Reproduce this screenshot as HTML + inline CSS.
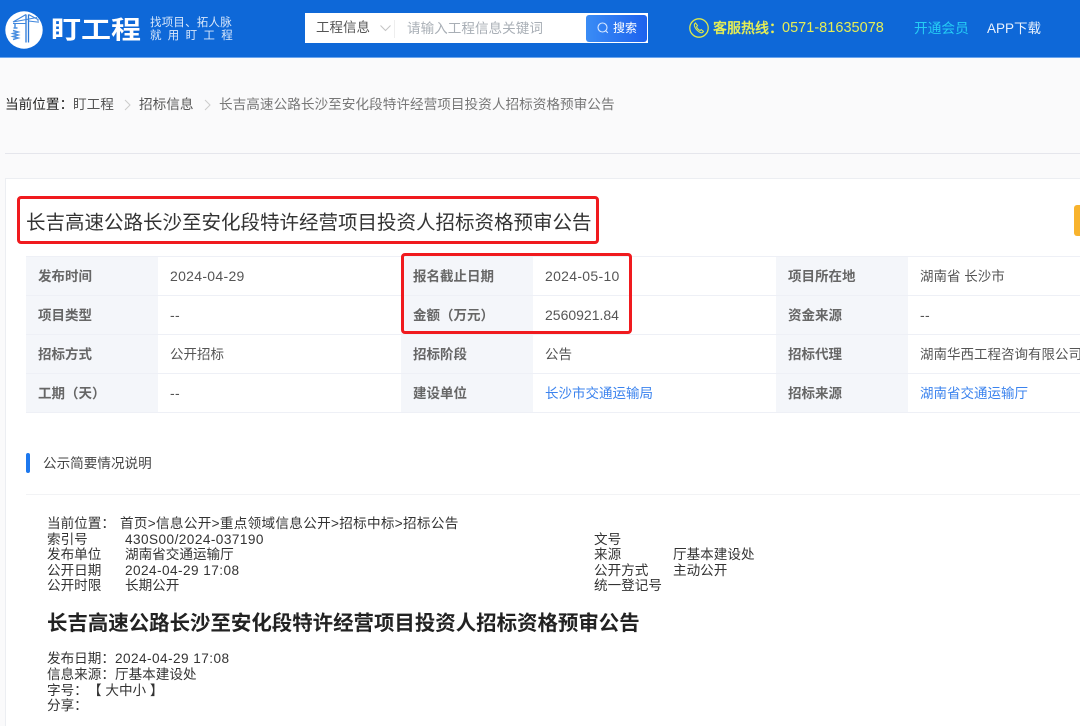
<!DOCTYPE html>
<html lang="zh">
<head>
<meta charset="utf-8">
<style>
html,body{margin:0;padding:0}
body{width:1080px;height:726px;overflow:hidden;position:relative;background:#fafafb;font-family:"Liberation Sans","Noto Sans CJK SC",sans-serif;color:#333}
.a{position:absolute;white-space:nowrap}
.t{line-height:16px;font-size:13.5px;color:#555}
.n{font-size:14px;letter-spacing:.3px}
.l{font-weight:700;color:#666}
.row{position:absolute;left:26px;width:1054px;height:1px;background:#eef0f6}
.lab{position:absolute;width:132px;top:257px;height:155px;background:#f4f6fa}
.doc{font-size:13.6px;line-height:15px;color:#333}
.d{letter-spacing:.45px}
.bc{font-size:13.65px;line-height:18px;top:96px}
</style>
</head>
<body>
<div class="a" style="left:0;top:0;width:1080px;height:57px;background:#0e68d8;border-bottom:1px solid #6aa5ee"></div>
<svg class="a" style="left:5px;top:11px" width="38" height="38" viewBox="0 0 38 38">
<circle cx="19" cy="19" r="18.7" fill="#fff"/>
<path d="M21 3.500V31.500M23.500 3.500V31.500" stroke="#2a78d8" stroke-width="1.300" fill="none"/>
<path d="M8 11L32 6.500M8 12.500H21M21 3.500L8 11M23.500 3.500L33 8.500V12M23.500 10L32 11" stroke="#3f86dc" stroke-width="1.100" fill="none"/>
<path d="M10 12.500v4M8.500 17h4M8 19.500l5 1.500-5 1.500 5 1.500-5 1.500 5 1.500-5 1.500" stroke="#4a8fe0" stroke-width="1.500" fill="none"/>
</svg>
<div class="a" style="left:51px;top:9px;font-size:30px;line-height:38px;font-weight:700;color:#fff;transform:scaleY(.84);transform-origin:left bottom">盯工程</div>
<div class="a" style="left:150px;top:17px;font-size:11.500px;line-height:13px;color:#d9e8fb;letter-spacing:.2px">找项目、拓人脉</div>
<div class="a" style="left:150px;top:30px;font-size:11.500px;line-height:13px;color:#d9e8fb;letter-spacing:6.300px">就用盯工程</div>

<div class="a" style="left:305px;top:13px;width:343px;height:30px;background:#fff"></div>
<div class="a" style="left:316px;top:19px;font-size:13.500px;line-height:18px;color:#555">工程信息</div>
<svg class="a" style="left:379px;top:24px" width="13" height="9" viewBox="0 0 13 9"><path d="M1.500 1.500L6.500 6.500L11.500 1.500" stroke="#c4c4c4" stroke-width="1" fill="none"/></svg>
<div class="a" style="left:394px;top:20px;width:1px;height:18px;background:#eee"></div>
<div class="a" style="left:407px;top:20px;font-size:13.600px;line-height:18px;color:#a9afb6">请输入工程信息关键词</div>
<div class="a" style="left:586px;top:15px;width:61px;height:27px;border-radius:3px;background:linear-gradient(90deg,#3a8cf5,#1d62ee)"></div>
<svg class="a" style="left:596px;top:21px" width="14" height="14" viewBox="0 0 14 14"><circle cx="6.500" cy="6.500" r="4.500" stroke="#d8e8ff" stroke-width="1.100" fill="none"/><path d="M10 10l1.800 1.800" stroke="#d8e8ff" stroke-width="1.100"/></svg>
<div class="a" style="left:613px;top:20px;font-size:12px;line-height:17px;color:#fff">搜索</div>

<svg class="a" style="left:689px;top:18px" width="20" height="20" viewBox="0 0 20 20"><circle cx="10" cy="10" r="9.200" stroke="#dde84a" stroke-width="1.300" fill="none"/><path d="M6.500 5c-1.500 1-1.500 2.600-.5 4.400 1.300 2.300 3 4 5 5 1.500.7 2.800.3 3.500-1l-2.300-1.800-1.200 1c-1.500-.8-2.800-2.200-3.500-3.800l1-1.200z" stroke="#dde84a" stroke-width="1.100" fill="none"/></svg>
<div class="a" style="left:713px;top:19px;font-size:14px;line-height:18px;font-weight:500;color:#e6ee55;-webkit-text-stroke:.25px #e6ee55">客服热线：</div>
<div class="a" style="left:782px;top:19px;font-size:14.500px;line-height:18px;color:#e6ee55;letter-spacing:.02px">0571-81635078</div>
<div class="a" style="left:914px;top:20px;font-size:13.700px;line-height:18px;color:#25cdf5">开通会员</div>
<div class="a" style="left:987px;top:20px;font-size:13.500px;line-height:18px;color:#e8f1fd">APP下载</div>

<div class="a bc" style="left:5px;color:#222">当前位置：</div>
<div class="a bc" style="left:73px;color:#555">盯工程</div>
<svg class="a" style="left:123px;top:99px" width="9" height="12" viewBox="0 0 9 12"><path d="M2 1l5 5-5 5" stroke="#ccc" stroke-width="1" fill="none"/></svg>
<div class="a bc" style="left:139px;color:#555">招标信息</div>
<svg class="a" style="left:203px;top:99px" width="9" height="12" viewBox="0 0 9 12"><path d="M2 1l5 5-5 5" stroke="#ccc" stroke-width="1" fill="none"/></svg>
<div class="a bc" style="left:219px;color:#777">长吉高速公路长沙至安化段特许经营项目投资人招标资格预审公告</div>
<div class="a" style="left:5px;top:153px;width:1075px;height:1px;background:#e5e6ec"></div>

<div class="a" style="left:5px;top:178px;width:1075px;height:548px;background:#fff;border-left:1px solid #eceef2;border-top:1px solid #eceef2;box-sizing:border-box"></div>
<div class="a" style="left:26px;top:211px;font-size:19.500px;line-height:24px;color:#333">长吉高速公路长沙至安化段特许经营项目投资人招标资格预审公告</div>
<div class="a" style="left:1074px;top:205px;width:6px;height:31px;background:#f8b32d;border-radius:3px 0 0 3px"></div>

<div class="lab" style="left:26px"></div>
<div class="lab" style="left:401px"></div>
<div class="lab" style="left:776px"></div>
<div class="row" style="top:256px"></div>
<div class="row" style="top:295px"></div>
<div class="row" style="top:334px"></div>
<div class="row" style="top:373px"></div>
<div class="row" style="top:412px"></div>

<div class="a t l" style="left:38px;top:269px">发布时间</div>
<div class="a t n" style="left:170px;top:268px">2024-04-29</div>
<div class="a t l" style="left:413px;top:269px">报名截止日期</div>
<div class="a t n" style="left:545px;top:268px">2024-05-10</div>
<div class="a t l" style="left:788px;top:269px">项目所在地</div>
<div class="a t" style="left:920px;top:269px">湖南省 长沙市</div>

<div class="a t l" style="left:38px;top:308px">项目类型</div>
<div class="a t n" style="left:170px;top:307px">--</div>
<div class="a t l" style="left:413px;top:308px">金额（万元）</div>
<div class="a t n" style="left:545px;top:307px;letter-spacing:0">2560921.84</div>
<div class="a t l" style="left:788px;top:308px">资金来源</div>
<div class="a t n" style="left:920px;top:307px">--</div>

<div class="a t l" style="left:38px;top:347px">招标方式</div>
<div class="a t" style="left:170px;top:347px">公开招标</div>
<div class="a t l" style="left:413px;top:347px">招标阶段</div>
<div class="a t" style="left:545px;top:347px">公告</div>
<div class="a t l" style="left:788px;top:347px">招标代理</div>
<div class="a t" style="left:920px;top:347px">湖南华西工程咨询有限公司</div>

<div class="a t l" style="left:38px;top:386px">工期（天）</div>
<div class="a t n" style="left:170px;top:385px">--</div>
<div class="a t l" style="left:413px;top:386px">建设单位</div>
<div class="a t" style="left:545px;top:386px;color:#3b83ee">长沙市交通运输局</div>
<div class="a t l" style="left:788px;top:386px">招标来源</div>
<div class="a t" style="left:920px;top:386px;color:#3b83ee">湖南省交通运输厅</div>

<div class="a" style="left:17px;top:196px;width:582px;height:48px;border:3px solid #f01a1e;border-radius:4px;box-sizing:border-box"></div>
<div class="a" style="left:401px;top:253px;width:231px;height:81px;border:3px solid #f01a1e;border-radius:4px;box-sizing:border-box"></div>

<div class="a" style="left:26px;top:453px;width:4px;height:20px;background:#1d78ee;border-radius:2px"></div>
<div class="a" style="left:43px;top:456px;font-size:13.600px;line-height:16px;color:#444">公示简要情况说明</div>
<div class="a" style="left:26px;top:494px;width:1054px;height:1px;background:#f2f3f5"></div>

<div class="a doc" style="left:47px;top:516px">当前位置：</div>
<div class="a doc" style="left:120px;top:516px;letter-spacing:.3px">首页&gt;信息公开&gt;重点领域信息公开&gt;招标中标&gt;招标公告</div>
<div class="a doc" style="left:47px;top:532px">索引号</div>
<div class="a doc d" style="left:125px;top:532px">430S00/2024-037190</div>
<div class="a doc" style="left:47px;top:547px">发布单位</div>
<div class="a doc" style="left:125px;top:547px">湖南省交通运输厅</div>
<div class="a doc" style="left:47px;top:563px">公开日期</div>
<div class="a doc d" style="left:125px;top:563px">2024-04-29 17:08</div>
<div class="a doc" style="left:47px;top:578px">公开时限</div>
<div class="a doc" style="left:125px;top:578px">长期公开</div>
<div class="a doc" style="left:594px;top:532px">文号</div>
<div class="a doc" style="left:594px;top:547px">来源</div>
<div class="a doc" style="left:673px;top:547px">厅基本建设处</div>
<div class="a doc" style="left:594px;top:563px">公开方式</div>
<div class="a doc" style="left:673px;top:563px">主动公开</div>
<div class="a doc" style="left:594px;top:578px">统一登记号</div>

<div class="a" style="left:47px;top:611px;font-size:20.450px;line-height:26px;font-weight:700;color:#222">长吉高速公路长沙至安化段特许经营项目投资人招标资格预审公告</div>

<div class="a doc" style="left:47px;top:651px">发布日期：</div>
<div class="a doc d" style="left:115px;top:651px">2024-04-29 17:08</div>
<div class="a doc" style="left:47px;top:667px">信息来源：</div>
<div class="a doc" style="left:115px;top:667px">厅基本建设处</div>
<div class="a doc" style="left:47px;top:683px">字号：</div>
<div class="a doc" style="left:88px;top:683px">【 大中小 】</div>
<div class="a doc" style="left:47px;top:698px">分享：</div>
</body>
</html>
